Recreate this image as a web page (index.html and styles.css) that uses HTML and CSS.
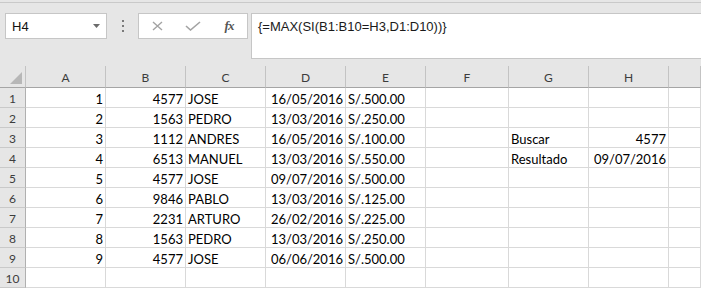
FILE: index.html
```html
<!DOCTYPE html>
<html>
<head>
	<meta charset="utf-8" />
	<title>Hoja1</title>
	<link rel="stylesheet" href="styles.css">
</head>
<body>
	<div class="toolbar">
		<div class="namebox">
			<span>H4</span>
			<svg class="arrow" width="7" height="4" viewBox="0 0 7 4"><polygon points="0,0 7,0 3.5,4" fill="#6b6b6b" /></svg>
		</div>
		<div class="grip"><i></i><i></i><i></i></div>
		<div class="fxbox">
			<span class="btn">
				<svg width="11" height="10" viewBox="0 0 11 10"><path d="M1 1 L10 9 M10 1 L1 9" stroke="#a3a3a3" stroke-width="1.4" fill="none" /></svg>
			</span>
			<span class="btn">
				<svg width="16" height="10" viewBox="0 0 16 10"><path d="M1 5 L5.5 9 L15 1" stroke="#a3a3a3" stroke-width="1.6" fill="none" /></svg>
			</span>
			<span class="btn fx">fx</span>
		</div>
		<div class="formula">{=MAX(SI(B1:B10=H3,D1:D10))}</div>
	</div>

	<div class="sheet">
		<div class="corner"><svg width="12" height="12" viewBox="0 0 12 12"><polygon points="12,0 12,12 0,12" fill="#b7b7b7" /></svg></div>
		<div class="colhead">A</div>
		<div class="colhead">B</div>
		<div class="colhead">C</div>
		<div class="colhead">D</div>
		<div class="colhead">E</div>
		<div class="colhead">F</div>
		<div class="colhead">G</div>
		<div class="colhead">H</div>
		<div class="colhead"></div>

		<div class="rowhead">1</div>
		<div class="cell num">1</div><div class="cell num">4577</div><div class="cell">JOSE</div><div class="cell num">16/05/2016</div><div class="cell">S/.500.00</div>
		<div class="cell"></div><div class="cell"></div><div class="cell"></div><div class="cell"></div>

		<div class="rowhead">2</div>
		<div class="cell num">2</div><div class="cell num">1563</div><div class="cell">PEDRO</div><div class="cell num">13/03/2016</div><div class="cell">S/.250.00</div>
		<div class="cell"></div><div class="cell"></div><div class="cell"></div><div class="cell"></div>

		<div class="rowhead">3</div>
		<div class="cell num">3</div><div class="cell num">1112</div><div class="cell">ANDRES</div><div class="cell num">16/05/2016</div><div class="cell">S/.100.00</div>
		<div class="cell"></div><div class="cell">Buscar</div><div class="cell num">4577</div><div class="cell"></div>

		<div class="rowhead">4</div>
		<div class="cell num">4</div><div class="cell num">6513</div><div class="cell">MANUEL</div><div class="cell num">13/03/2016</div><div class="cell">S/.550.00</div>
		<div class="cell"></div><div class="cell">Resultado</div><div class="cell num">09/07/2016</div><div class="cell"></div>

		<div class="rowhead">5</div>
		<div class="cell num">5</div><div class="cell num">4577</div><div class="cell">JOSE</div><div class="cell num">09/07/2016</div><div class="cell">S/.500.00</div>
		<div class="cell"></div><div class="cell"></div><div class="cell"></div><div class="cell"></div>

		<div class="rowhead">6</div>
		<div class="cell num">6</div><div class="cell num">9846</div><div class="cell">PABLO</div><div class="cell num">13/03/2016</div><div class="cell">S/.125.00</div>
		<div class="cell"></div><div class="cell"></div><div class="cell"></div><div class="cell"></div>

		<div class="rowhead">7</div>
		<div class="cell num">7</div><div class="cell num">2231</div><div class="cell">ARTURO</div><div class="cell num">26/02/2016</div><div class="cell">S/.225.00</div>
		<div class="cell"></div><div class="cell"></div><div class="cell"></div><div class="cell"></div>

		<div class="rowhead">8</div>
		<div class="cell num">8</div><div class="cell num">1563</div><div class="cell">PEDRO</div><div class="cell num">13/03/2016</div><div class="cell">S/.250.00</div>
		<div class="cell"></div><div class="cell"></div><div class="cell"></div><div class="cell"></div>

		<div class="rowhead">9</div>
		<div class="cell num">9</div><div class="cell num">4577</div><div class="cell">JOSE</div><div class="cell num">06/06/2016</div><div class="cell">S/.500.00</div>
		<div class="cell"></div><div class="cell"></div><div class="cell"></div><div class="cell"></div>

		<div class="rowhead">10</div>
		<div class="cell"></div><div class="cell"></div><div class="cell"></div><div class="cell"></div><div class="cell"></div>
		<div class="cell"></div><div class="cell"></div><div class="cell"></div><div class="cell"></div>
	</div>
</body>
</html>
```

FILE: styles.css
```css
html,
body {
	margin: 0;
	padding: 0;
	width: 701px;
	height: 288px;
	overflow: hidden;
	background: #e6e6e6;
}

body {
	font-family: "Liberation Sans", Arial, sans-serif;
}

/* barra de formulas */
.toolbar {
	margin-top: 2px;
	border-top: 1px solid #c9c9c9;
	height: 64px;
	box-sizing: border-box;
	padding: 10px 0 0 5px;
	display: flex;
	align-items: flex-start;
}

.namebox {
	width: 102px;
	height: 26px;
	box-sizing: border-box;
	background: #fff;
	border: 1px solid #c6c6c6;
	display: flex;
	align-items: center;
	justify-content: space-between;
	padding: 0 6px 0 6px;
	font-size: 13px;
	color: #111;
}

.namebox .arrow {
	margin-top: -1px;
}

.grip {
	width: 31px;
	height: 26px;
	display: flex;
	flex-direction: column;
	align-items: center;
	justify-content: center;
	gap: 3px;
}

.grip i {
	display: block;
	width: 2px;
	height: 2px;
	background: #7a7a7a;
}

.fxbox {
	width: 110px;
	height: 26px;
	box-sizing: border-box;
	background: #fff;
	border: 1px solid #c6c6c6;
	display: flex;
	align-items: center;
	padding-left: 0;
}

.fxbox .btn {
	width: 36px;
	display: flex;
	justify-content: center;
	align-items: center;
}

.fxbox .fx {
	font-family: "Liberation Serif", "Times New Roman", serif;
	font-style: italic;
	font-weight: bold;
	font-size: 13px;
	color: #555;
	letter-spacing: -1px;
}

.formula {
	flex: 1;
	margin-left: 3px;
	margin-right: -2px;
	height: 46px;
	box-sizing: border-box;
	background: #fff;
	border: 1px solid #c6c6c6;
	padding: 5px 0 0 6px;
	font-size: 13px;
	line-height: 16px;
	color: #1a1a1a;
}

/* hoja */
.sheet {
	display: grid;
	grid-template-columns: 26px 80px 80px 80px 80px 80px 83px 80px 80px 1fr;
	grid-template-rows: 22px repeat(10, 20px);
	font-family: Lato, "Liberation Sans", sans-serif;
}

.corner,
.colhead {
	background: #e6e6e6;
	border-bottom: 1px solid #a5a5a5;
	box-sizing: border-box;
}

.corner {
	border-right: 1px solid #c3c3c3;
	display: flex;
	align-items: flex-end;
	padding: 0 0 3px 10px;
}

.colhead {
	border-right: 1px solid #c3c3c3;
	text-align: center;
	font-size: 12px;
	line-height: 22px;
	color: #3c3c3c;
	padding-top: 1px;
}

.rowhead {
	background: #e6e6e6;
	border-right: 1px solid #b0b0b0;
	border-bottom: 1px solid #c9c9c9;
	box-sizing: border-box;
	text-align: center;
	font-size: 12px;
	line-height: 20px;
	color: #3c3c3c;
	padding-top: 1px;
}

.cell {
	background: #fff;
	border-right: 1px solid #d9d9d9;
	border-bottom: 1px solid #d9d9d9;
	box-sizing: border-box;
	font-size: 13px;
	line-height: 16px;
	padding: 3px 2px 0 2px;
	color: #000;
	white-space: nowrap;
	overflow: hidden;
}

.cell.num {
	text-align: right;
}
```
